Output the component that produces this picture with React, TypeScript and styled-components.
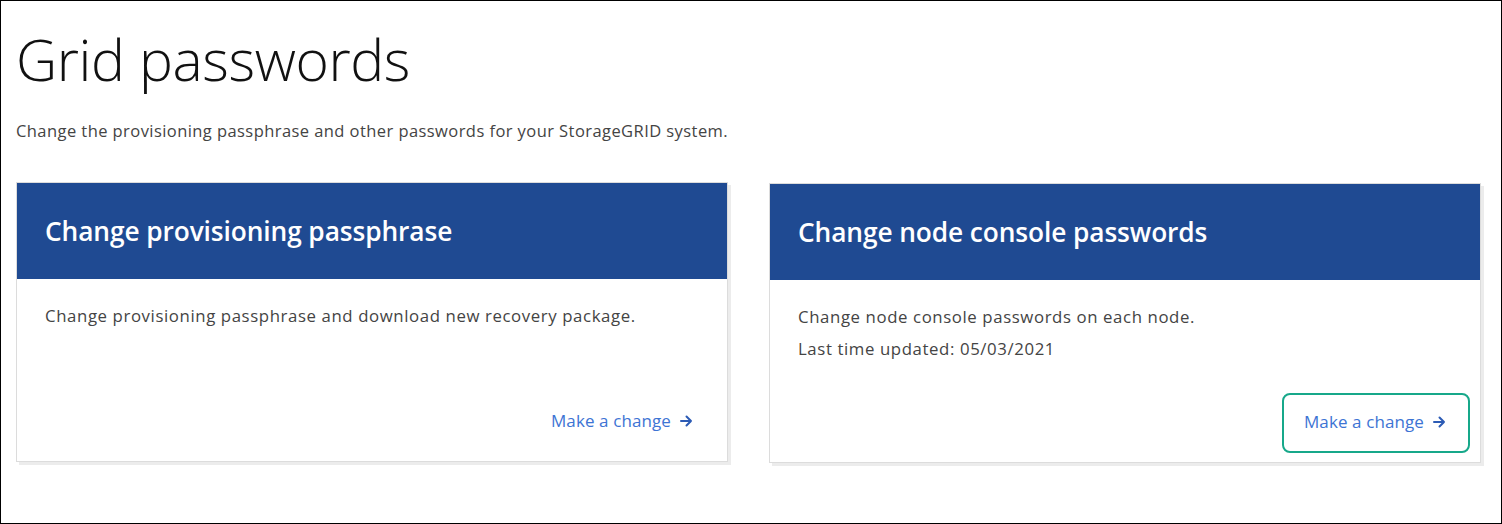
import React from 'react';
import styled, { createGlobalStyle } from 'styled-components';

const GlobalStyle = createGlobalStyle`
  html, body {
    margin: 0;
    padding: 0;
    background: #ffffff;
  }
  body {
    font-family: "Open Sans", "Liberation Sans", sans-serif;
    color: #333333;
  }
`;

const Frame = styled.div`
  box-sizing: border-box;
  width: 1502px;
  height: 524px;
  border: 1px solid #000000;
  padding: 0 20px 0 15px;
  display: flex;
  flex-direction: column;
`;

const Title = styled.h1`
  margin: 20px 0 0;
  font-size: 57px;
  font-weight: 300;
  line-height: 76px;
  color: #111111;
  letter-spacing: -0.4px;
`;

const Intro = styled.p`
  margin: 23px 0 0;
  font-size: 16.5px;
  letter-spacing: 0.43px;
  line-height: 22px;
  color: #444444;
`;

const CardRow = styled.div`
  margin-top: 40px;
  display: grid;
  grid-template-columns: 712px 712px;
  column-gap: 41px;
  align-items: start;
`;

const Card = styled.section<{ $offset?: number }>`
  height: 278px;
  margin-top: ${(p) => p.$offset ?? 0}px;
  border: 1px solid #dcdcdc;
  box-shadow: 3px 3px 0 #ececec;
  display: flex;
  flex-direction: column;
  background: #ffffff;
`;

const CardHeader = styled.div`
  height: 96px;
  background: #1f4a92;
  display: flex;
  align-items: center;
  padding: 0 28px;
`;

const CardTitle = styled.h2`
  margin: 0 0 1px;
  color: #ffffff;
  font-size: 26.3px;
  font-weight: 600;
  letter-spacing: -0.1px;
`;

const CardBody = styled.div`
  flex: 1;
  padding: 21px 28px 0;
  font-size: 16.8px;
  letter-spacing: 0.6px;
  line-height: 32px;
  color: #444444;
`;

const CardFooter = styled.div`
  display: flex;
  justify-content: flex-end;
  padding: 0 10px 9px;
`;

const ChangeLink = styled.a<{ $focused?: boolean }>`
  display: inline-flex;
  align-items: center;
  gap: 9px;
  height: 53px;
  padding: 0 22px 3px 20px;
  border: 2px solid ${(p) => (p.$focused ? '#17a88a' : 'transparent')};
  border-radius: 8px;
  color: #3d74d4;
  font-size: 17px;
  letter-spacing: 0.1px;
  text-decoration: none;
  cursor: pointer;
`;

const Arrow = () => (
  <svg width="13" height="12" viewBox="0 0 13 12" fill="none">
    <path d="M1 6h10M6.5 1.5L11 6l-4.5 4.5" stroke="#2c5bb5" strokeWidth="2" strokeLinecap="round" strokeLinejoin="round" />
  </svg>
);

export default function App(): JSX.Element {
  return (
    <>
      <GlobalStyle />
      <Frame>
        <Title>Grid passwords</Title>
        <Intro>Change the provisioning passphrase and other passwords for your StorageGRID system.</Intro>
        <CardRow>
          <Card>
            <CardHeader>
              <CardTitle>Change provisioning passphrase</CardTitle>
            </CardHeader>
            <CardBody>Change provisioning passphrase and download new recovery package.</CardBody>
            <CardFooter>
              <ChangeLink>
                Make a change <Arrow />
              </ChangeLink>
            </CardFooter>
          </Card>
          <Card $offset={1}>
            <CardHeader>
              <CardTitle>Change node console passwords</CardTitle>
            </CardHeader>
            <CardBody>
              Change node console passwords on each node.
              <br />
              Last time updated: 05/03/2021
            </CardBody>
            <CardFooter>
              <ChangeLink $focused>
                Make a change <Arrow />
              </ChangeLink>
            </CardFooter>
          </Card>
        </CardRow>
      </Frame>
    </>
  );
}
